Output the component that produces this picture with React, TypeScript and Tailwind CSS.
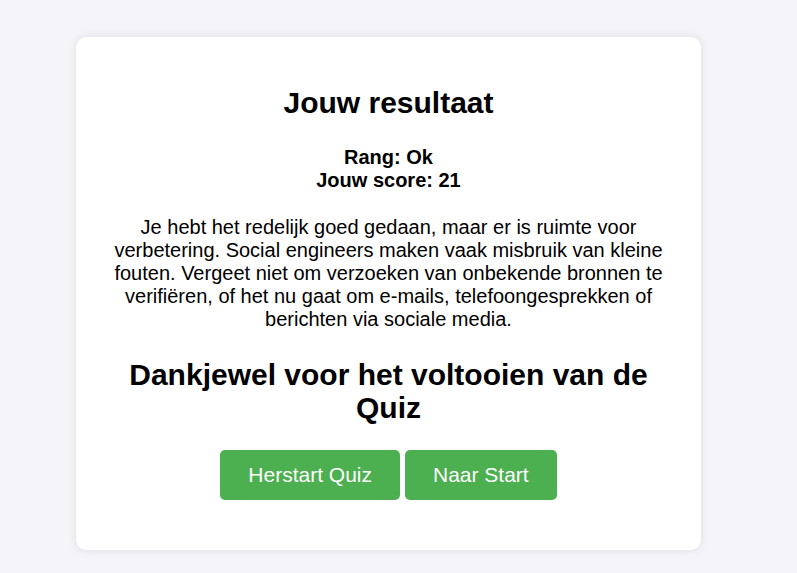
export default function App() {
  return (
    <div className="min-h-[573px] bg-[#f4f4f9] pl-[76px] pt-[37px] font-['Liberation_Sans',Arial,sans-serif] text-black">
      <div className="w-[625px] rounded-[10px] bg-white px-[36px] pt-[49px] pb-[50px] text-center shadow-[0_0_10px_rgba(0,0,0,0.1)]">
        <h2 className="text-[30px] font-bold leading-[34.5px]">Jouw resultaat</h2>
        <div className="mt-[25.5px] text-[20px] font-bold leading-[23px]">
          <p>Rang: Ok</p>
          <p>Jouw score: 21</p>
        </div>
        <p className="mt-[24px] text-[20px] leading-[23px]">
          Je hebt het redelijk goed gedaan, maar er is ruimte voor verbetering. Social engineers maken vaak misbruik van
          kleine fouten. Vergeet niet om verzoeken van onbekende bronnen te verifiëren, of het nu gaat om e-mails,
          telefoongesprekken of berichten via sociale media.
        </p>
        <h2 className="mt-[27px] text-[30px] font-bold leading-[33px]">Dankjewel voor het voltooien van de Quiz</h2>
        <div className="mt-[26px] flex justify-center gap-[5px]">
          <button className="h-[50px] rounded-[5px] bg-[#4caf50] px-[28px] text-[21px] text-white">Herstart Quiz</button>
          <button className="h-[50px] rounded-[5px] bg-[#4caf50] px-[28px] text-[21px] text-white">Naar Start</button>
        </div>
      </div>
    </div>
  )
}
